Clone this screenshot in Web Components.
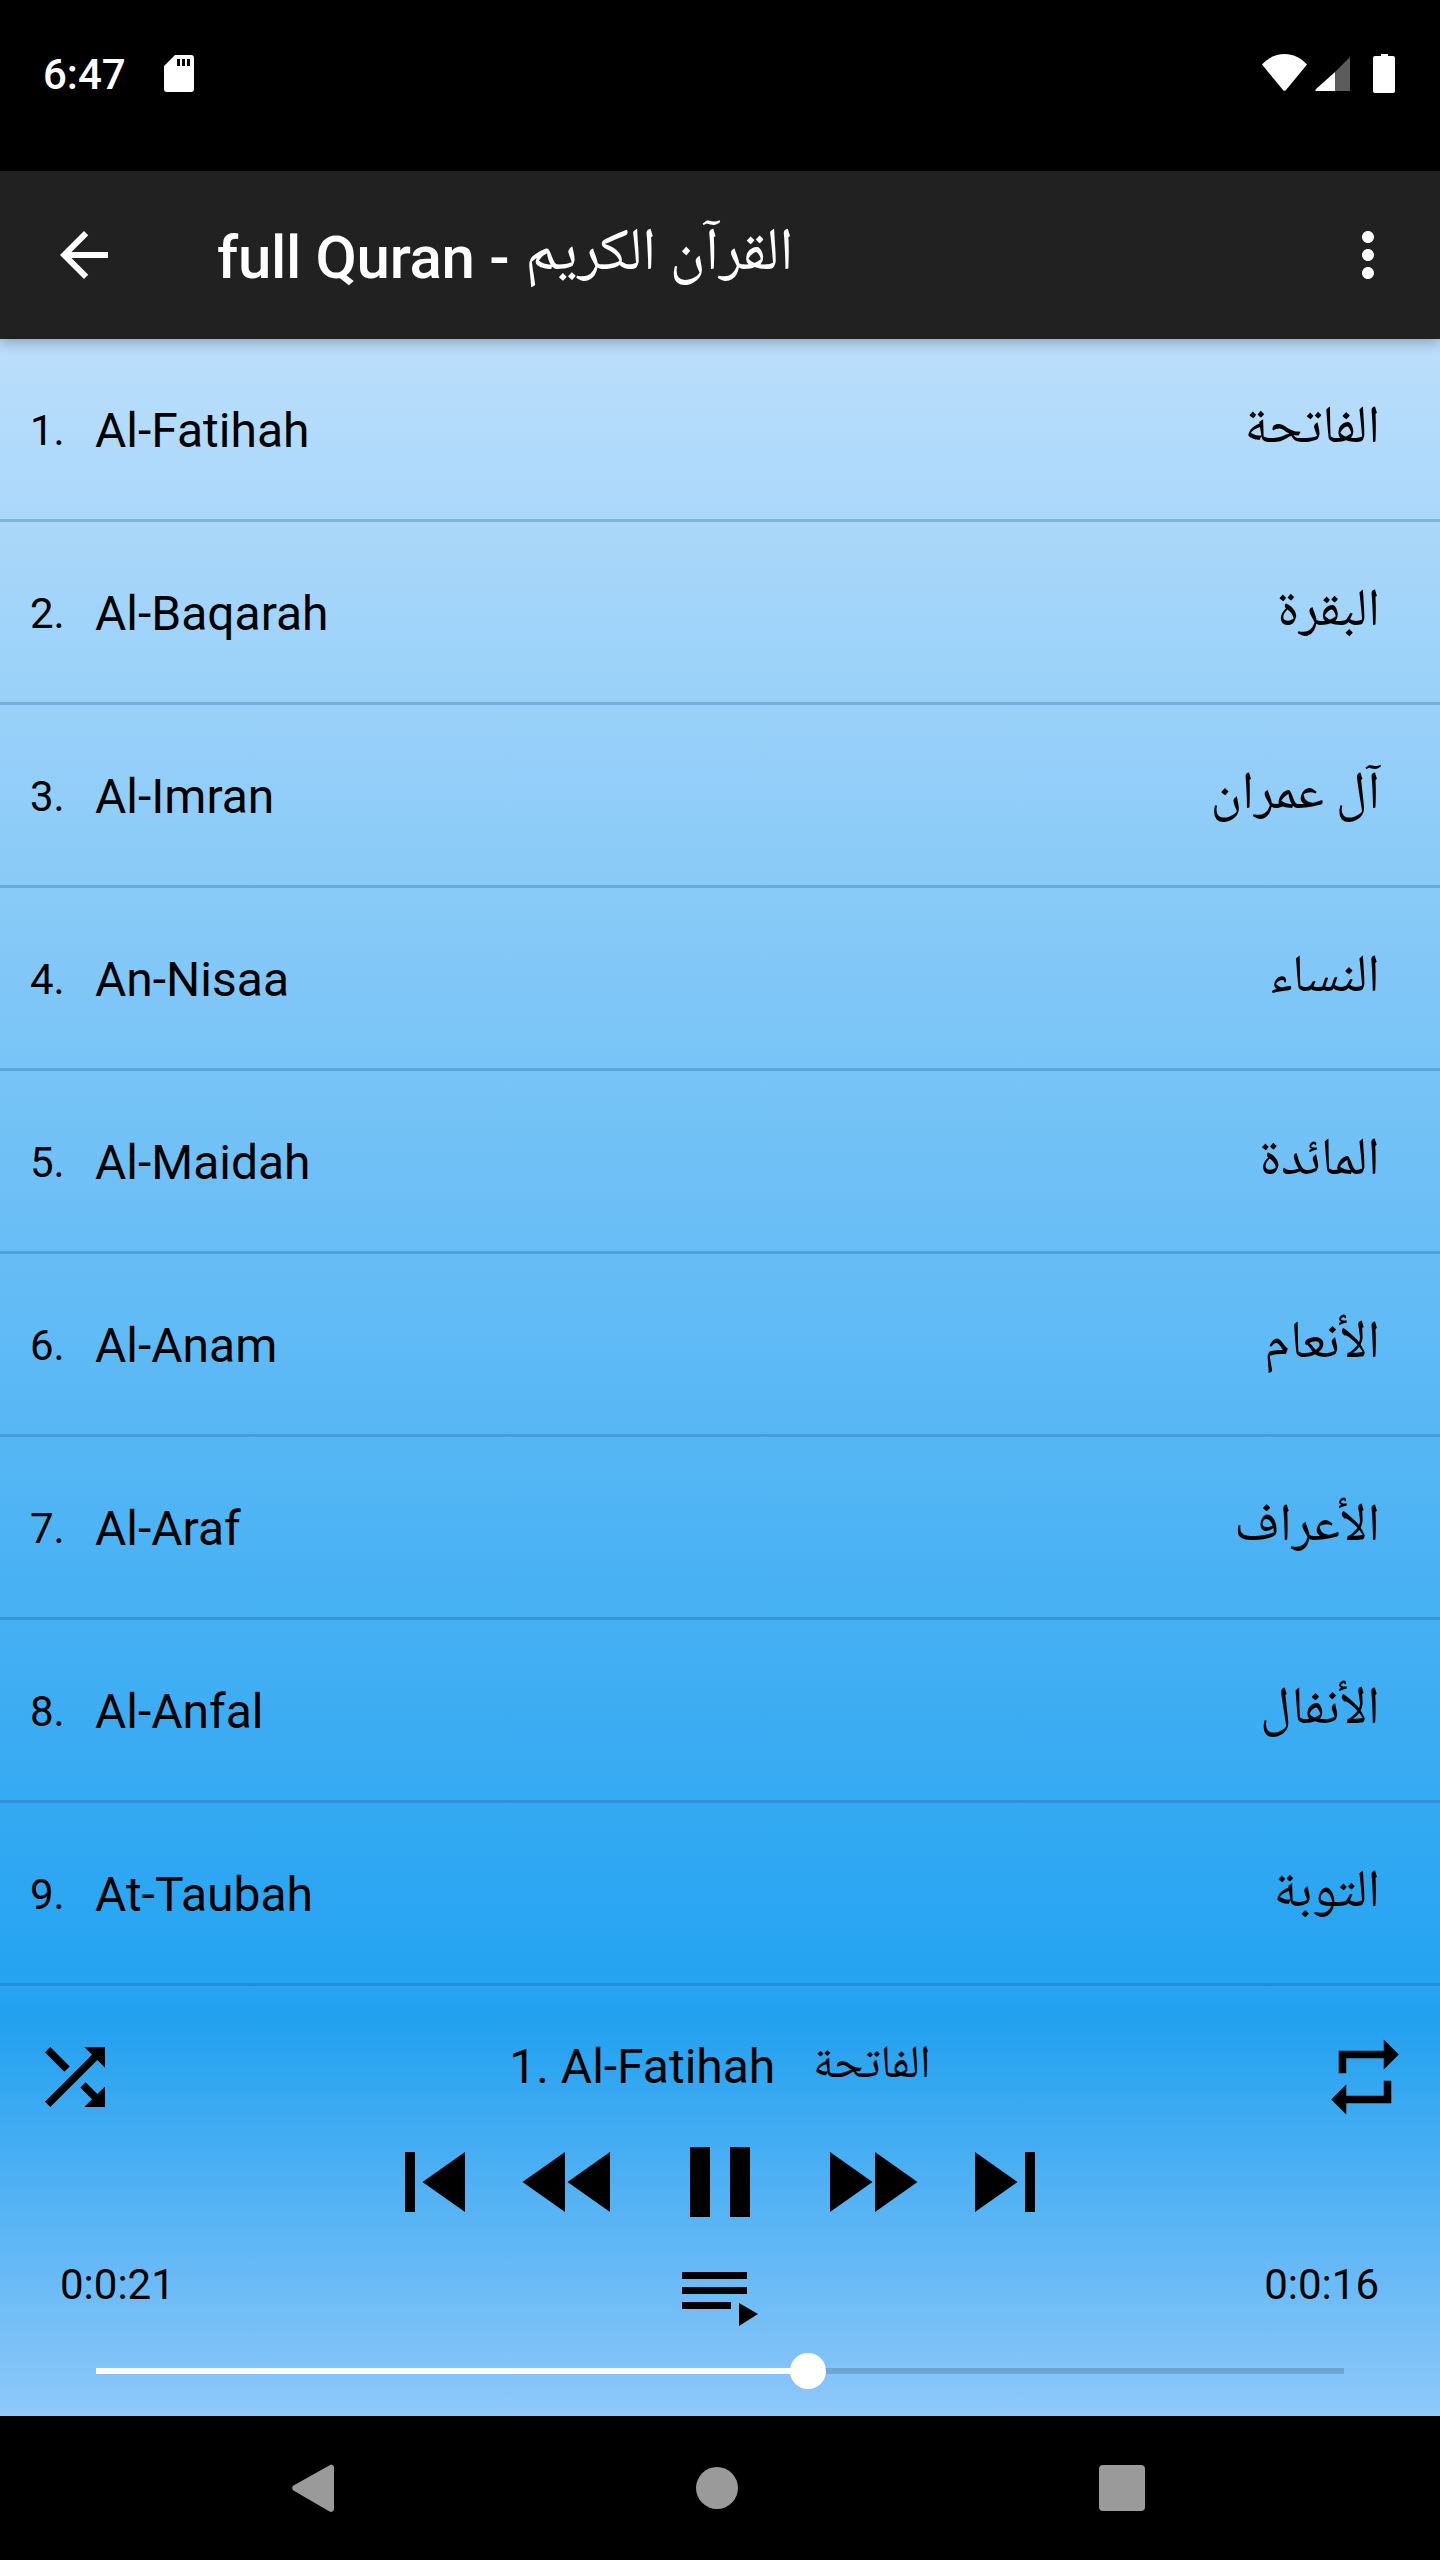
<!DOCTYPE html>
<html>
<head>
<meta charset="utf-8">
<title>full Quran</title>
<style>
  html, body { margin: 0; padding: 0; background: #000; }
  body { width: 1440px; height: 2560px; display: flex; flex-direction: column; font-family: Roboto, "DejaVu Sans", sans-serif; }
  surah-list { flex: 1; }
</style>
</head>
<body>
<status-bar></status-bar>
<app-bar></app-bar>
<surah-list></surah-list>
<player-panel></player-panel>
<nav-bar></nav-bar>

<script>
const ARABIC = '"Noto Naskh Arabic", "DejaVu Sans", sans-serif';

const ICONS = {
  back: 'M20 11H7.83l5.59-5.59L12 4l-8 8 8 8 1.41-1.41L7.83 13H20v-2z',
  more: 'M12 8c1.1 0 2-.9 2-2s-.9-2-2-2-2 .9-2 2 .9 2 2 2zm0 2c-1.1 0-2 .9-2 2s.9 2 2 2 2-.9 2-2-.9-2-2-2zm0 6c-1.1 0-2 .9-2 2s.9 2 2 2 2-.9 2-2-.9-2-2-2z',
  shuffle: 'M10.59 9.17L5.41 4 4 5.41l5.17 5.17 1.42-1.41zM14.5 4l2.04 2.04L4 18.59 5.41 20 17.96 7.46 20 9.5V4h-5.5zm.33 9.41l-1.41 1.41 3.13 3.13L14.5 20H20v-5.5l-2.04 2.04-3.13-3.13z',
  repeat: 'M7 7h10v3l4-4-4-4v3H5v6h2V7zm10 10H7v-3l-4 4 4 4v-3h12v-6h-2v4z',
  prev: 'M6 6h2v12H6zm3.5 6l8.5 6V6z',
  rewind: 'M11 18V6l-8.5 6 8.5 6zm.5-6l8.5 6V6l-8.5 6z',
  pause: 'M6 19h4V5H6v14zm8-14v14h4V5h-4z',
  forward: 'M4 18l8.5-6L4 6v12zm9-12v12l8.5-6L13 6z',
  next: 'M6 18l8.5-6L6 6v12zM16 6v12h2V6h-2z',
};

class SvgIcon extends HTMLElement {
  connectedCallback() {
    const size = this.getAttribute('size') || '24';
    const d = ICONS[this.getAttribute('icon')] || '';
    this.attachShadow({ mode: 'open' }).innerHTML = `
      <style>
        :host { display: block; width: ${size}px; height: ${size}px; flex: none; line-height: 0; }
        svg { width: 100%; height: 100%; fill: currentColor; }
      </style>
      <svg viewBox="0 0 24 24"><path d="${d}"/></svg>`;
  }
}

class StatusBar extends HTMLElement {
  connectedCallback() {
    this.attachShadow({ mode: 'open' }).innerHTML = `
      <style>
        :host { display: flex; align-items: flex-start; height: 171px; flex: none; background: #000; color: #fff; padding: 54px 44px 0 43px; box-sizing: border-box; }
        .time { font: 500 42px/42px Roboto, sans-serif; width: 121px; }
        .right { margin-left: auto; display: flex; }
        svg { display: block; fill: #fff; }
      </style>
      <span class="time">6:47</span>
      <svg width="30" height="38" viewBox="0 0 30 38"><path fill-rule="evenodd" d="M11 1h16a3 3 0 0 1 3 3v31a3 3 0 0 1-3 3H3a3 3 0 0 1-3-3V12zM13 5v7h3V5zM18 5v7h3V5zM23 5v7h3V5z"/></svg>
      <div class="right">
        <svg width="134" height="40" viewBox="0 0 134 40">
          <path d="M0 10.5C6 4 14 0 22.5 0S39 4 45 10.500L24 36a2 2 0 0 1-3 0z"/>
          <path d="M73 18L88 3v34H73z" fill="#5c5c5c"/>
          <path d="M73 18v19H55a1 1 0 0 1-1-2z"/>
          <path d="M119 0h7v3h5a2 2 0 0 1 2 2v33a2 2 0 0 1-2 2h-18a2 2 0 0 1-2-2V5a2 2 0 0 1 2-2h6z" transform="translate(0 -1)"/>
        </svg>
      </div>`;
  }
}

class AppBar extends HTMLElement {
  connectedCallback() {
    this.attachShadow({ mode: 'open' }).innerHTML = `
      <style>
        :host { display: flex; align-items: center; height: 168px; flex: none; position: relative; z-index: 1; background: #212121; color: #fff; padding: 0 36px 0 48px; box-sizing: border-box; box-shadow: 0 4px 12px rgba(0,0,0,.25); }
        .title { margin-left: 97px; font: 500 60px/72px Roboto, ${ARABIC}; white-space: nowrap; letter-spacing: -.3px; display: flex; align-items: center; gap: 16px; margin-top: 6px; }
        .title bdi { font-weight: 400; font-family: ${ARABIC}; font-size: 60px; letter-spacing: 0; margin-top: -4px; }
        svg-icon { color: #fff; }
        svg-icon:last-child { margin-left: auto; }
      </style>
      <svg-icon icon="back" size="72"></svg-icon>
      <span class="title">full Quran - <bdi>القرآن الكريم</bdi></span>
      <svg-icon icon="more" size="72"></svg-icon>`;
  }
}

class SurahRow extends HTMLElement {
  connectedCallback() {
    this.attachShadow({ mode: 'open' }).innerHTML = `
      <style>
        :host { display: flex; align-items: center; height: 183px; flex: none; box-sizing: border-box; padding: 0 60px 0 30px; border-bottom: 3px solid rgba(20,90,150,.28); color: #000; }
        .num { width: 65px; font: 42px/56px Roboto, sans-serif; margin-top: 4px; }
        .name { font: 48px/56px Roboto, sans-serif; margin-top: 4px; }
        .ar { margin-left: auto; font: 53px/56px ${ARABIC}; margin-top: 4px; }
      </style>
      <span class="num">${this.getAttribute('num')}.</span>
      <span class="name">${this.getAttribute('name')}</span>
      <bdi class="ar" dir="rtl">${this.getAttribute('ar')}</bdi>`;
  }
}

const SURAHS = [
  ['Al-Fatihah', 'الفاتحة'],
  ['Al-Baqarah', 'البقرة'],
  ['Al-Imran', 'آل عمران'],
  ['An-Nisaa', 'النساء'],
  ['Al-Maidah', 'المائدة'],
  ['Al-Anam', 'الأنعام'],
  ['Al-Araf', 'الأعراف'],
  ['Al-Anfal', 'الأنفال'],
  ['At-Taubah', 'التوبة'],
];

class SurahList extends HTMLElement {
  connectedCallback() {
    const root = this.attachShadow({ mode: 'open' });
    root.innerHTML = `
      <style>
        :host { display: flex; flex-direction: column; background: linear-gradient(#bbdefb, #24a3f1 100%); overflow: hidden; }
      </style>`;
    SURAHS.forEach(([name, ar], i) => {
      const row = document.createElement('surah-row');
      row.setAttribute('num', i + 1);
      row.setAttribute('name', name);
      row.setAttribute('ar', ar);
      root.appendChild(row);
    });
  }
}

class SeekBar extends HTMLElement {
  connectedCallback() {
    this.attachShadow({ mode: 'open' }).innerHTML = `
      <style>
        :host { display: block; position: relative; height: 6px; background: rgba(0,0,0,.15); }
        .done { height: 100%; width: 712px; background: #fff; }
        .thumb { position: absolute; left: 694px; top: -15px; width: 36px; height: 36px; border-radius: 50%; background: #fff; }
      </style>
      <div class="done"></div>
      <div class="thumb"></div>`;
  }
}

class PlayerPanel extends HTMLElement {
  connectedCallback() {
    this.attachShadow({ mode: 'open' }).innerHTML = `
      <style>
        :host { display: flex; flex-direction: column; height: 430px; flex: none; box-sizing: border-box; padding-top: 46px; background: linear-gradient(#27a5f2 0%, #20a0ef 6%, #8fc8f9 100%); color: #000; }
        .top { display: flex; align-items: center; justify-content: space-between; height: 90px; padding: 0 30px; }
        .now { display: flex; align-items: center; gap: 38px; margin-top: -20px; }
        .now .name { font: 48px/56px Roboto, sans-serif; }
        .now .ar { font: 46px/56px ${ARABIC}; margin-top: 0; }
        .controls { display: flex; justify-content: center; height: 120px; }
        .rew { margin: 0 30px 0 15px; }
        .fwd { margin: 0 15px 0 30px; }
        .times { display: flex; align-items: flex-start; justify-content: space-between; height: 90px; padding: 24px 61px 0 60px; box-sizing: border-box; font: 42px/38px Roboto, sans-serif; }
        .times svg { display: block; margin-top: 6px; margin-left: 0; }
        seek-bar { margin: 36px 96px 0; }
      </style>
      <div class="top">
        <svg-icon icon="shuffle" size="90"></svg-icon>
        <div class="now"><span class="name">1. Al-Fatihah</span><bdi class="ar" dir="rtl">الفاتحة</bdi></div>
        <svg-icon icon="repeat" size="90"></svg-icon>
      </div>
      <div class="controls">
        <svg-icon icon="prev" size="120"></svg-icon>
        <svg-icon class="rew" icon="rewind" size="120"></svg-icon>
        <svg-icon icon="pause" size="120"></svg-icon>
        <svg-icon class="fwd" icon="forward" size="120"></svg-icon>
        <svg-icon icon="next" size="120"></svg-icon>
      </div>
      <div class="times">
        <span>0:0:21</span>
        <svg width="76" height="54" viewBox="0 0 76 54"><path d="M0 0h65v7H0zM0 15h65v7H0zM0 30h49v7H0zM57 31l19 11-19 12z"/></svg>
        <span>0:0:16</span>
      </div>
      <seek-bar></seek-bar>`;
  }
}

class NavBar extends HTMLElement {
  connectedCallback() {
    this.attachShadow({ mode: 'open' }).innerHTML = `
      <style>
        :host { display: flex; align-items: center; justify-content: space-between; height: 144px; flex: none; box-sizing: border-box; padding: 0 295px 0 292px; background: #000; }
        svg { display: block; fill: #9a9a9a; }
      </style>
      <svg width="42" height="48" viewBox="0 0 42 48"><path d="M39 0.500a3 3 0 0 1 3 2.500v42a3 3 0 0 1-4.500 2.500L1.500 26.500a3 3 0 0 1 0-5z"/></svg>
      <svg width="42" height="42" viewBox="0 0 42 42"><circle cx="21" cy="21" r="21"/></svg>
      <svg width="46" height="46" viewBox="0 0 46 46"><rect width="46" height="46" rx="4"/></svg>`;
  }
}

customElements.define('svg-icon', SvgIcon);
customElements.define('status-bar', StatusBar);
customElements.define('app-bar', AppBar);
customElements.define('surah-row', SurahRow);
customElements.define('surah-list', SurahList);
customElements.define('seek-bar', SeekBar);
customElements.define('player-panel', PlayerPanel);
customElements.define('nav-bar', NavBar);
</script>
</body>
</html>
